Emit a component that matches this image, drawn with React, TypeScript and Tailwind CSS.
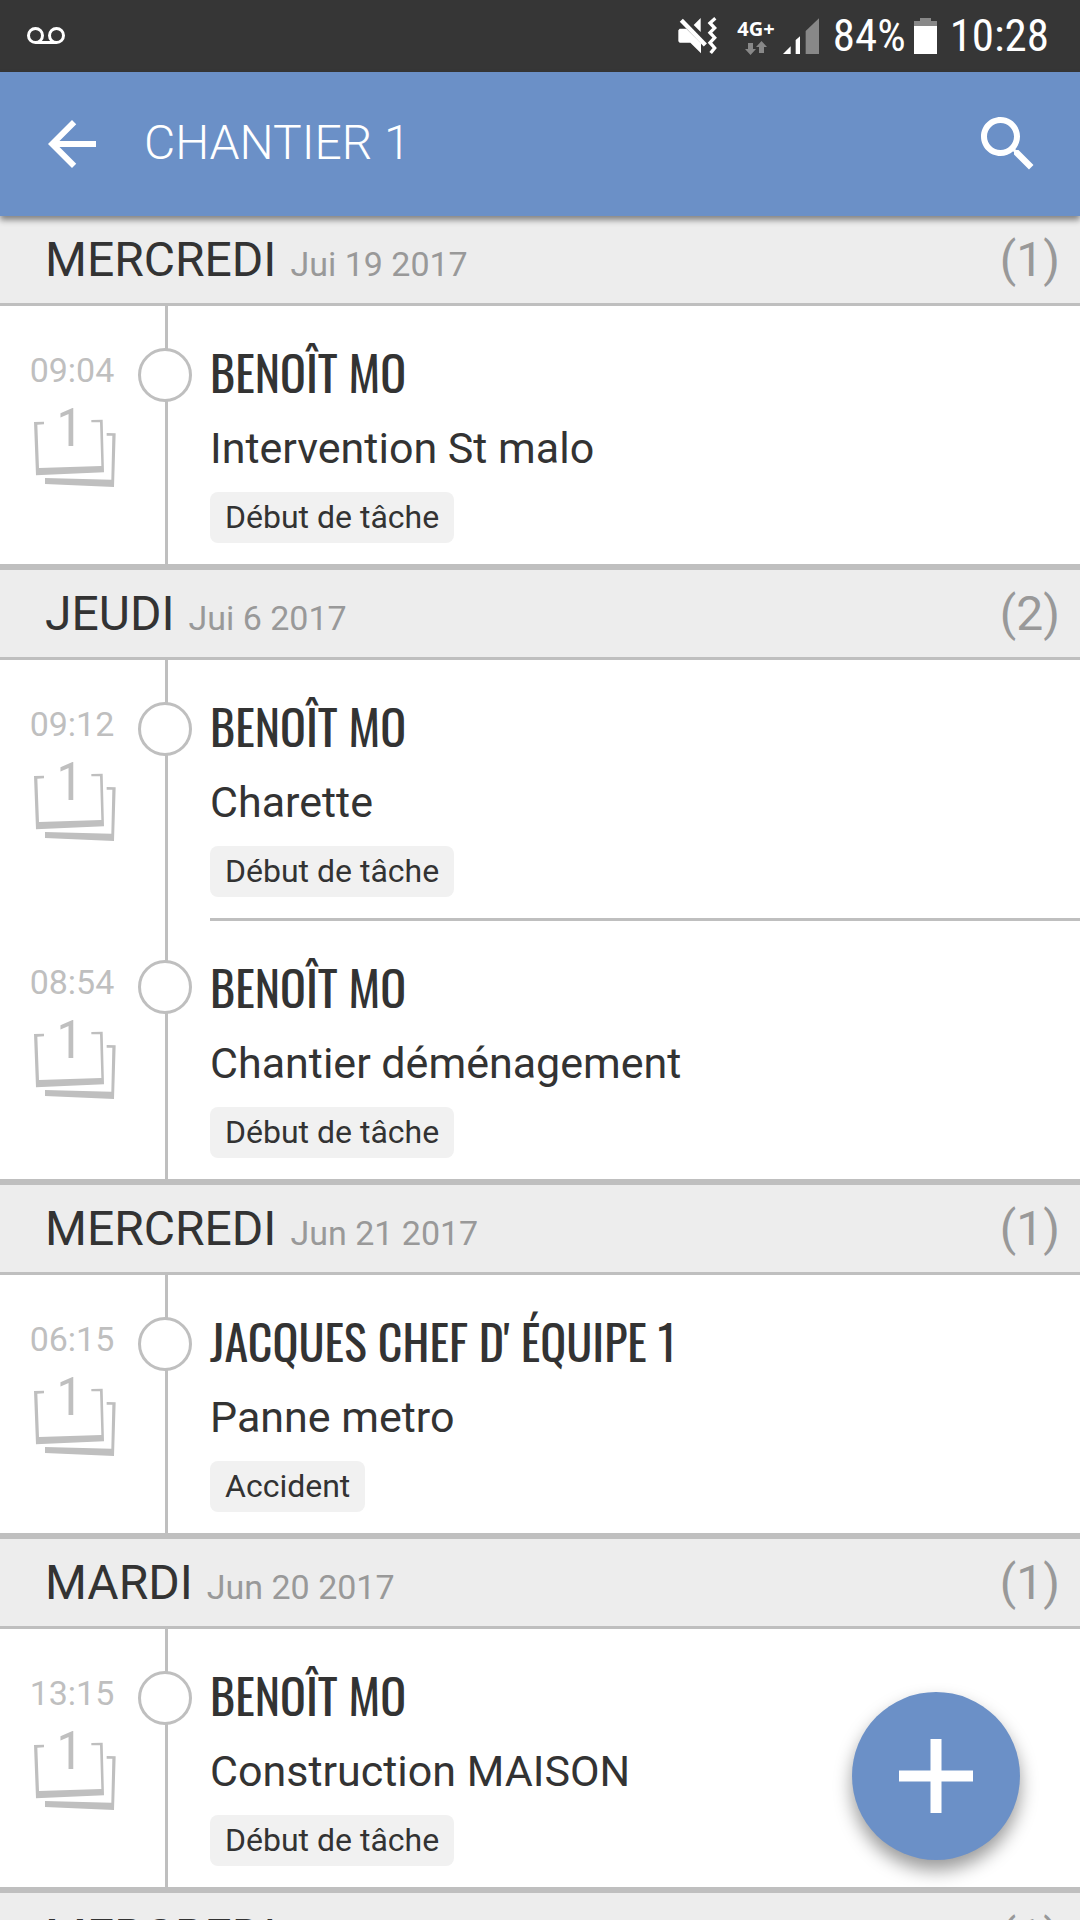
import React from "react";

type Item = { time: string; photos: number; author: string; title: string; tag: string };
type Day = { day: string; date: string; count: number; items: Item[] };

const days: Day[] = [
  {
    day: "MERCREDI",
    date: "Jui 19 2017",
    count: 1,
    items: [{ time: "09:04", photos: 1, author: "BENOÎT MO", title: "Intervention St malo", tag: "Début de tâche" }],
  },
  {
    day: "JEUDI",
    date: "Jui 6 2017",
    count: 2,
    items: [
      { time: "09:12", photos: 1, author: "BENOÎT MO", title: "Charette", tag: "Début de tâche" },
      { time: "08:54", photos: 1, author: "BENOÎT MO", title: "Chantier déménagement", tag: "Début de tâche" },
    ],
  },
  {
    day: "MERCREDI",
    date: "Jun 21 2017",
    count: 1,
    items: [{ time: "06:15", photos: 1, author: "JACQUES CHEF D' ÉQUIPE 1", title: "Panne metro", tag: "Accident" }],
  },
  {
    day: "MARDI",
    date: "Jun 20 2017",
    count: 1,
    items: [{ time: "13:15", photos: 1, author: "BENOÎT MO", title: "Construction MAISON", tag: "Début de tâche" }],
  },
  { day: "MERCREDI", date: "", count: 1, items: [] },
];

function StatusBar() {
  return (
    <div className="flex h-[72px] shrink-0 items-center justify-between bg-[#363636] pl-[27px] pr-[31px] text-white">
      <svg width="38" height="18" viewBox="0 0 38 18" fill="none" stroke="currentColor" strokeWidth="3" aria-label="Messagerie vocale">
        <circle cx="8.5" cy="8.5" r="7" />
        <circle cx="29.5" cy="8.5" r="7" />
        <path d="M8.5 15.5h21" />
      </svg>
      <div className="flex items-center">
        <svg className="mr-5" width="40" height="40" viewBox="20 20 120 120" fill="currentColor" aria-label="Silencieux">
          <path d="M24 63l4-5h20l44 44v30L60 100H28l-4-4z" />
          <path d="M70 47l21-21v42z" />
          <path d="M33 33l72 74" stroke="currentColor" strokeWidth="13" />
          <path d="M135 27l-16 14 14 15-14 14 14 15-14 15 14 16-12 15" fill="none" stroke="currentColor" strokeWidth="10" />
        </svg>
        <div className="mr-2 flex flex-col items-center">
          <span className="font-['Open_Sans'] text-xl font-bold leading-6">4G+</span>
          <svg width="22" height="15" viewBox="0 0 22 15" fill="#888888">
            <path d="M3 2h5v6h3l-5.5 6L0 8h3z" />
            <path d="M14 12V6h-3l5.5-6L22 6h-3v6z" />
          </svg>
        </div>
        <svg className="mr-[14px]" width="36" height="36" viewBox="340 24 108 108" aria-label="Signal">
          <path d="M340 132l23-23v23z" fill="#fff" />
          <path d="M378 132V90l13-11v53z" fill="#fff" />
          <path d="M408 132V63l40-38v107z" fill="#888888" />
        </svg>
        <span className="mr-2 font-['Roboto_Condensed'] text-[45px] leading-[54px]">84%</span>
        <svg className="mr-[13px]" width="23" height="36" viewBox="0 0 23 36" aria-label="Batterie">
          <path d="M0 3h6V0h11v3h6v6H0z" fill="#888888" />
          <path d="M0 8h23v28H0z" fill="#fff" />
        </svg>
        <span className="font-['Roboto_Condensed'] text-[45px] leading-[54px]">10:28</span>
      </div>
    </div>
  );
}

function AppBar() {
  return (
    <header className="relative z-10 flex h-36 shrink-0 items-center bg-[#6b90c7] px-9 text-white shadow-[0_4px_6px_rgba(0,0,0,0.45)]">
      <button type="button" aria-label="Retour">
        <svg width="72" height="72" viewBox="0 0 24 24" fill="currentColor">
          <path d="M20 11H7.83l5.59-5.59L12 4l-8 8 8 8 1.41-1.41L7.83 13H20v-2z" />
        </svg>
      </button>
      <h1 className="ml-9 flex-1 pb-0.5 text-5xl font-light">CHANTIER 1</h1>
      <button type="button" aria-label="Rechercher">
        <svg width="72" height="72" viewBox="0 0 24 24" fill="currentColor">
          <path d="M15.5 14h-.79l-.28-.27C15.41 12.59 16 11.11 16 9.5 16 5.91 13.09 3 9.5 3S3 5.91 3 9.5 5.91 16 9.5 16c1.61 0 3.09-.59 4.23-1.57l.27.28v.79l5 4.99L20.49 19l-4.99-5zm-6 0C7.01 14 5 11.99 5 9.5S7.01 5 9.5 5 14 7.01 14 9.5 11.99 14 9.5 14z" />
        </svg>
      </button>
    </header>
  );
}

function PhotoStack({ count }: { count: number }) {
  return (
    <svg className="-mt-1" width="96" height="105" viewBox="0 -48 288 315" fill="#bfbfbf" aria-label="Photos">
      <path d="M30 66l30-1v8l-20 1 5 130 187-6-4-131h-26v-7l34-1 4 158-204 9z" />
      <path d="M248 99l27 1-5 161-207-9v-18l199 5 3-132h-17z" />
      <text x="137" y="139" textAnchor="middle" fontSize="162" fontFamily="Roboto Condensed">
        {count}
      </text>
    </svg>
  );
}

function Row({ item, divided }: { item: Item; divided: boolean }) {
  return (
    <li className="flex bg-white">
      <div className="flex w-[138px] flex-col items-center pl-1.5 pt-[46px] text-[#bfbfbf]">
        <time className="text-[34px] leading-9">{item.time}</time>
        <PhotoStack count={item.photos} />
      </div>
      <div className="relative w-[54px]">
        <div className="ml-[27px] h-full w-[3px] bg-[#bfbfbf]" />
        <div className="absolute left-0 top-[42px] size-[54px] rounded-full border-3 border-[#bfbfbf] bg-white" />
      </div>
      <div className={divided ? "ml-[18px] flex-1 border-t-3 border-[#bfbfbf]" : "ml-[18px] flex-1"}>
        <div className="flex flex-col items-start pb-[21px] pt-9">
          <h3 className="font-['Oswald'] text-5xl leading-[60px]">{item.author}</h3>
          <p className="mt-4 text-[43px] leading-[60px]">{item.title}</p>
          <span className="mt-[14px] rounded-lg bg-[#f1f1f1] px-[15px] text-[32px] leading-[51px]">{item.tag}</span>
        </div>
      </div>
    </li>
  );
}

function DaySection({ day }: { day: Day }) {
  return (
    <section className="border-b-6 border-[#bfbfbf]">
      <div className="flex h-[90px] items-center justify-between border-b-3 border-[#bfbfbf] bg-[#ededed] pl-[45px] pr-5">
        <h2 className="flex items-baseline gap-[14px] text-5xl">
          {day.day}
          <span className="text-[34px] text-[#999999]">{day.date}</span>
        </h2>
        <span className="text-5xl text-[#999999]">({day.count})</span>
      </div>
      <ul>
        {day.items.map((item, i) => (
          <Row key={item.time} item={item} divided={i > 0} />
        ))}
      </ul>
    </section>
  );
}

export default function App() {
  return (
    <div className="flex h-dvh flex-col overflow-hidden bg-white font-['Roboto',sans-serif] text-[#333333]">
      <StatusBar />
      <AppBar />
      <main className="min-h-0 flex-1 overflow-hidden">
        {days.map((day, i) => (
          <DaySection key={i} day={day} />
        ))}
      </main>
      <button
        type="button"
        aria-label="Ajouter"
        className="fixed bottom-[60px] right-[60px] z-20 flex size-[168px] items-center justify-center rounded-full bg-[#6b90c7] text-white shadow-[0_10px_18px_rgba(0,0,0,0.4)]"
      >
        <svg width="74" height="74" viewBox="0 0 74 74" stroke="currentColor" strokeWidth="11">
          <path d="M37 0v74M0 37h74" />
        </svg>
      </button>
    </div>
  );
}
